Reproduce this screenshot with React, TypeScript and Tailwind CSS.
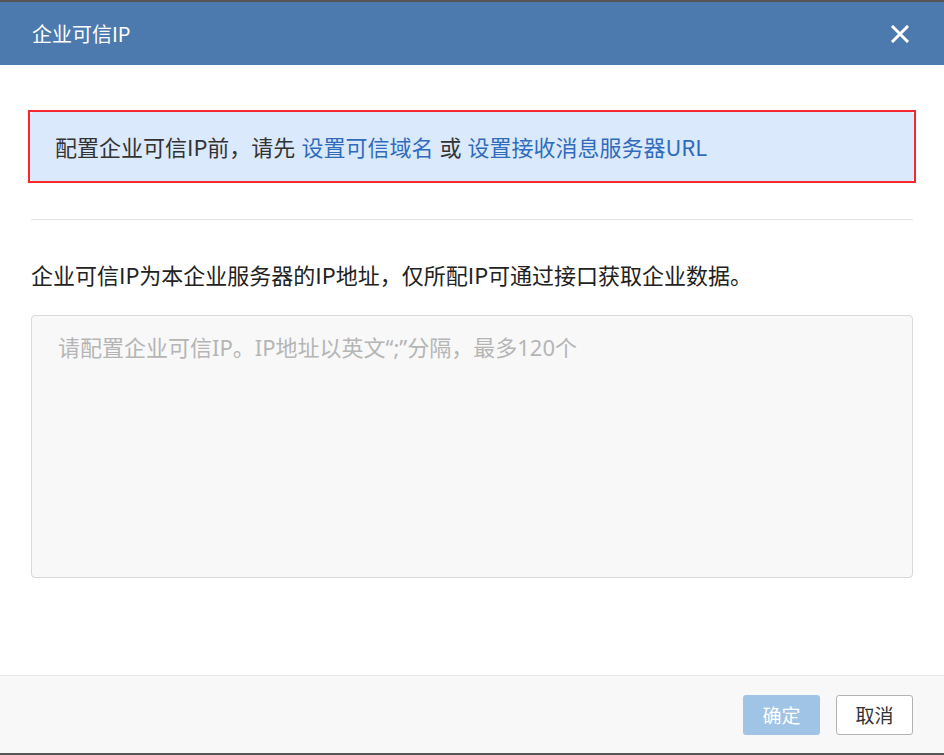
import React from "react";

const font = { fontFamily: '"Noto Sans CJK SC", "Noto Sans", sans-serif' };

function CloseIcon() {
  return (
    <svg width="18" height="18" viewBox="0 0 18 18" fill="none" aria-hidden="true">
      <path d="M2 2L16 16M16 2L2 16" stroke="#ffffff" strokeWidth="3" strokeLinecap="square" />
    </svg>
  );
}

export default function App() {
  return (
    <div
      className="flex h-[755px] w-[944px] flex-col border-t-2 border-b-2 border-[#555555] bg-white"
      style={font}
    >
      <header className="flex h-[63px] items-center justify-between bg-[#4c7aae] pl-[32px] pr-[32px]">
        <h1 className="text-[20px] leading-[26px] text-white">企业可信IP</h1>
        <button className="flex h-[24px] w-[24px] items-center justify-center">
          <CloseIcon />
        </button>
      </header>

      <main className="flex flex-1 flex-col px-[28px] pt-[45px]">
        <div className="h-[73px] border-2 border-[#f8262e]">
          <div className="flex h-full items-center rounded-[4px] bg-[#dbe9fc] pl-[25px] text-[22px] text-[#333333]">
            <span>配置企业可信IP前，请先</span>
            <a className="ml-[6px] text-[#2f6cbd]" href="#">
              设置可信域名
            </a>
            <span className="ml-[6px]">或</span>
            <a className="ml-[6px] text-[#2f6cbd]" href="#">
              设置接收消息服务器URL
            </a>
          </div>
        </div>

        <div className="mx-[3px] mt-[36px] h-px bg-[#e3e3e3]" />

        <p className="mx-[3px] mt-[39px] text-[22px] leading-[30px] text-[#222222]">
          企业可信IP为本企业服务器的IP地址，仅所配IP可通过接口获取企业数据。
        </p>

        <textarea
          className="mx-[3px] mt-[26px] h-[263px] resize-none rounded-[4px] border border-[#d9d9d9] bg-[#f8f8f8] px-[26px] pt-[16px] font-['Noto_Sans','Noto_Sans_CJK_SC',sans-serif] text-[22px] leading-[30px] text-[#333333] outline-none placeholder:text-[#b5b5b5]"
          placeholder="请配置企业可信IP。IP地址以英文“;”分隔，最多120个"
        />
      </main>

      <footer className="flex h-[78px] items-start justify-end gap-[16px] border-t border-[#e6e6e6] bg-[#f8f8f8] pr-[31px] pt-[19px]">
        <button className="h-[40px] w-[77px] rounded-[3px] bg-[#a0c4e6] text-[19px] text-white">
          确定
        </button>
        <button className="h-[40px] w-[77px] rounded-[3px] border border-[#b3b3b3] bg-white text-[19px] text-[#333333]">
          取消
        </button>
      </footer>
    </div>
  );
}
